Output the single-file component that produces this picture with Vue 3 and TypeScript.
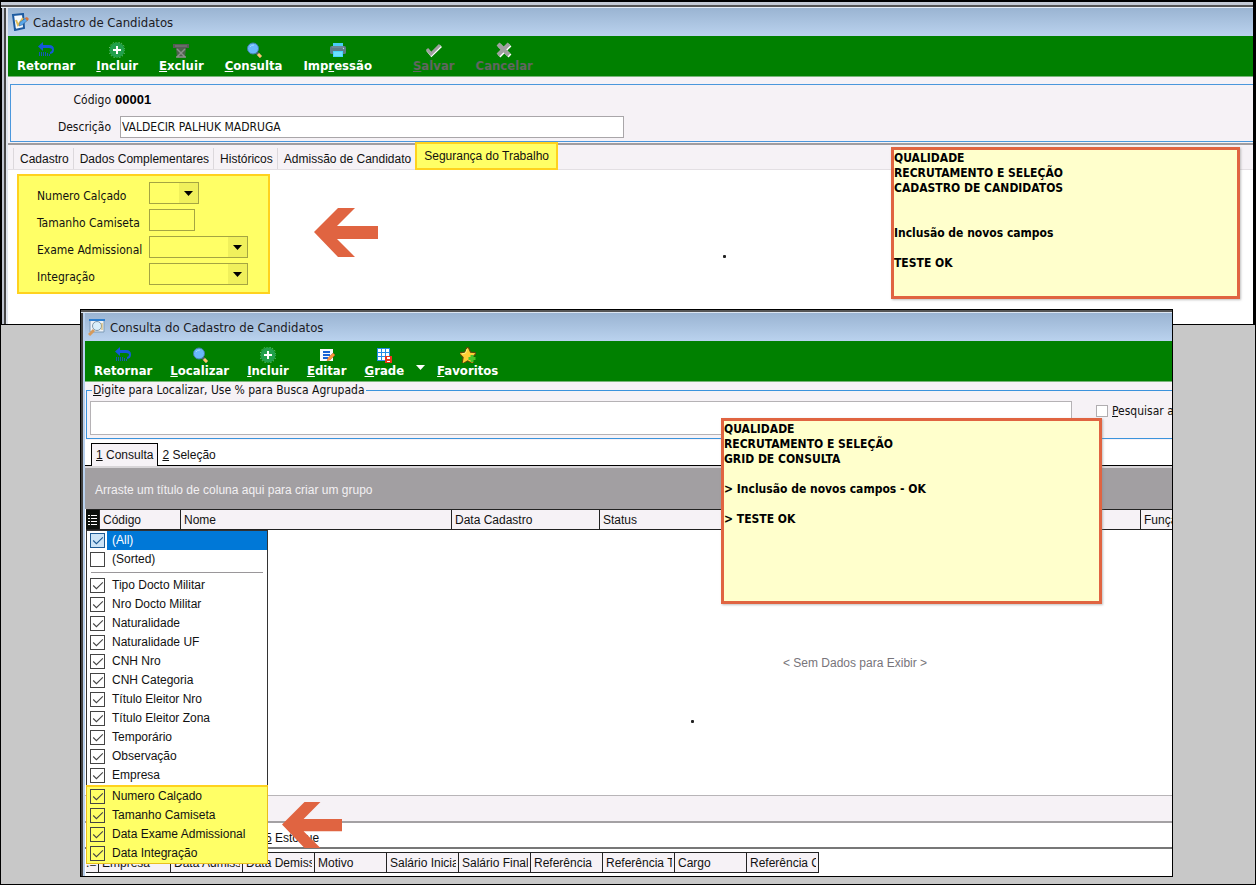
<script setup lang="ts">
import { ref } from 'vue'

interface Tool {
  label: [string, string, string]
  icon: string
  disabled?: boolean
  menu?: boolean
}

const icons: Record<string, string> = {
  back:
    '<path d="M0 4.500 5 0v3h6q5 0 5 4.500 0 4-4 4.500v-2q2-.5 2-2.200Q14 6 11 6H5v3z" fill="#1558d8"/><path d="M1.500 10v4M3.500 10v4M5.500 10v4M7.500 10v4M9.500 11v3M11.500 12v2" stroke="#1558b4" stroke-width="1"/>',
  add:
    '<circle cx="8" cy="8" r="8" fill="none" stroke="#9adba0" stroke-width="1" stroke-dasharray="1 2"/><circle cx="8" cy="8" r="7.500" fill="#22a04c"/><path d="M8 4v8M4 8h8" stroke="#fff" stroke-width="2"/>',
  trash:
    '<path d="M0 2h16v4H0z" fill="#565a56"/><path d="M2 4h12" stroke="#7b807b"/><path d="M3 6h10l-1 9.500H4z" fill="#4c624c"/><path d="M4 7l8 8M12 7l-8 8M3 15h10" stroke="#8b8f8b" stroke-width="1.500"/>',
  search:
    '<path d="m10 10 5 5" stroke="#4e6268" stroke-width="3"/><path d="m12 12 3 3" stroke="#ffc96a" stroke-width="3"/><circle cx="7" cy="6.500" r="5.500" fill="#69b9fb" stroke="#427fa9"/><path d="M4 5q1-2 4-2" stroke="#a1d8ff" fill="none"/>',
  print:
    '<path d="M3 1h10v4H3z" fill="#48cdf8"/><rect y="4" width="16" height="8" rx="1.500" fill="#5e7b89"/><path d="M2 5h12" stroke="#7897a3"/><path d="M3 9h10v6H3z" fill="#48d6ff"/><path d="M4 11h8M4 13h8" stroke="#90ebff"/><circle cx="13.500" cy="6.500" r=".7" fill="#bed5e0"/>',
  check:
    '<path d="m1.500 8 4 5L15 4" fill="none" stroke="#fff" stroke-width="3"/><path d="m1 7 4 5 9-9" fill="none" stroke="#a0a0a0" stroke-width="3"/>',
  cancel:
    '<path d="m3 3 11 11M14 3 3 14" stroke="#fff" stroke-width="4"/><path d="m2 2 11 11M13 2 2 13" stroke="#a0a0a0" stroke-width="4"/>',
  edit:
    '<path d="M1 2h13v12H1z" fill="#f7faff"/><path d="M4 5h7M4 8h7M4 11h5" stroke="#1762d5" stroke-width="2"/><path d="m8 14 1-3 5-5 2 2-5 5z" fill="#ff963c" stroke="#b85e23" stroke-width=".5"/>',
  grid:
    '<path d="M1 1h13v13H1z" fill="#238de6"/><path d="M2 2h3v3H2zM6 2h3v3H6zM10 2h3v3h-3zM2 6h3v3H2zM6 6h3v3H6zM10 6h3v3h-3zM2 10h3v3H2zM6 10h3v3H6z" fill="#fff"/><path d="M9 9h7v7H9z" fill="#ec321d"/><path d="M11 10h3v2h-3zM11 14h3v1h-3z" fill="#fff"/>',
  star:
    '<path d="m8 0 2.500 5.300 5.500.6-4 4 1 6-5-3-5 3 1-6-4-4 5.500-.6z" fill="#ffcf35" stroke="#5a4908" transform="translate(-1.500 -1) scale(1.150)"/><path d="m7 2-1.500 4L2 7" stroke="#fff486" fill="none"/><path d="M12 8v7M8.500 11.500h7" stroke="#48c629" stroke-width="3"/>',
}

const registerTools: Tool[] = [
  { label: ['Retornar', '', ''], icon: 'back' },
  { label: ['', 'I', 'ncluir'], icon: 'add' },
  { label: ['', 'E', 'xcluir'], icon: 'trash' },
  { label: ['', 'C', 'onsulta'], icon: 'search' },
  { label: ['Imp', 'r', 'essão'], icon: 'print' },
  { label: ['', 'S', 'alvar'], icon: 'check', disabled: true },
  { label: ['Cancelar', '', ''], icon: 'cancel', disabled: true },
]

const queryTools: Tool[] = [
  { label: ['Retornar', '', ''], icon: 'back' },
  { label: ['', 'L', 'ocalizar'], icon: 'search' },
  { label: ['', 'I', 'ncluir'], icon: 'add' },
  { label: ['', 'E', 'ditar'], icon: 'edit' },
  { label: ['', 'G', 'rade'], icon: 'grid', menu: true },
  { label: ['', 'F', 'avoritos'], icon: 'star' },
]

const tabs = ['Cadastro', 'Dados Complementares', 'Históricos', 'Admissão de Candidato', 'Segurança do Trabalho']
const activeTab = ref(4)

const fields = [
  { id: 'calcado', label: 'Numero Calçado', kind: 'select', size: 'small' },
  { id: 'camiseta', label: 'Tamanho Camiseta', kind: 'input', size: 'tiny' },
  { id: 'exame', label: 'Exame Admissional', kind: 'select', size: 'wide' },
  { id: 'integracao', label: 'Integração', kind: 'select', size: 'wide' },
]

const registerNote = ['QUALIDADE', 'RECRUTAMENTO E SELEÇÃO', 'CADASTRO DE CANDIDATOS', '', '', 'Inclusão de novos campos', '', 'TESTE OK']
const queryNote = ['QUALIDADE', 'RECRUTAMENTO E SELEÇÃO', 'GRID DE CONSULTA', '', '> Inclusão de novos campos - OK', '', '> TESTE OK']

const modes = ref([
  { label: '(All)', on: true },
  { label: '(Sorted)', on: false },
])
const columns = ref(
  ['Tipo Docto Militar', 'Nro Docto Militar', 'Naturalidade', 'Naturalidade UF', 'CNH Nro', 'CNH Categoria',
    'Título Eleitor Nro', 'Título Eleitor Zona', 'Temporário', 'Observação', 'Empresa'].map((label) => ({ label, on: true })),
)
const newColumns = ref(
  ['Numero Calçado', 'Tamanho Camiseta', 'Data Exame Admissional', 'Data Integração'].map((label) => ({ label, on: true })),
)

const detailHeads = ['Empresa', 'Data Admissão', 'Data Demissão', 'Motivo', 'Salário Inicial', 'Salário Final',
  'Referência', 'Referência Tab', 'Cargo', 'Referência Cargo']

const description = ref('VALDECIR PALHUK MADRUGA')
const search = ref('')
const searchAll = ref(false)
</script>

<template>
  <main class="desktop">
    <section class="window register">
      <header class="titlebar">
        <svg class="app-icon" viewBox="0 0 18 18" aria-hidden="true">
          <path d="M2 2 12 1l1 14-9 2z" fill="#f4f9ff" stroke="#1d5aa0" stroke-width="2" />
          <path d="m5 7 2 5 5-7" fill="none" stroke="#e3bd58" stroke-width="2" />
          <path d="m8 13 1-4 6-4 2 2-6 5z" fill="#5aa7ea" stroke="#31608e" stroke-width=".5" />
          <path d="m14 5 2-1 2 2-2 2z" fill="#d8733d" />
        </svg>
        <h1>Cadastro de Candidatos</h1>
      </header>
      <nav class="toolbar roomy">
        <button v-for="tool in registerTools" :key="tool.icon" type="button" class="tool" :disabled="tool.disabled">
          <svg viewBox="0 0 16 16" aria-hidden="true" v-html="icons[tool.icon]"></svg>
          <span>{{ tool.label[0] }}<u>{{ tool.label[1] }}</u>{{ tool.label[2] }}</span>
        </button>
      </nav>
      <div class="identity-area">
        <div class="identity">
          <span class="caption">Código</span>
          <output class="code">00001</output>
          <label class="caption" for="descricao">Descrição</label>
          <input id="descricao" v-model="description" class="description" type="text" />
        </div>
      </div>
      <div class="tabs" role="tablist">
        <button
          v-for="(tab, i) in tabs"
          :key="tab"
          type="button"
          role="tab"
          class="tab"
          :class="{ active: i === activeTab }"
          :aria-selected="i === activeTab"
          @click="activeTab = i"
        >{{ tab }}</button>
      </div>
      <div class="page">
        <form class="safety" @submit.prevent>
          <template v-for="field in fields" :key="field.id">
            <label :for="field.id">{{ field.label }}</label>
            <span v-if="field.kind === 'select'" class="combo" :class="field.size">
              <select :id="field.id"><option value=""></option></select>
              <svg viewBox="0 0 9 5" aria-hidden="true"><path d="M0 0h9L4.500 5z" /></svg>
            </span>
            <input v-else :id="field.id" type="text" :class="field.size" />
          </template>
        </form>
      </div>
    </section>

    <svg class="pointer first" viewBox="0 0 64 50" aria-hidden="true">
      <path d="M0 24 24 0h17L23 18h41v13H23l18 18H24z" />
    </svg>
    <i class="dot upper"></i>

    <aside class="note note-register">
      <p v-for="(line, i) in registerNote" :key="i">{{ line }}</p>
    </aside>

    <section class="window query">
      <header class="titlebar">
        <svg class="app-icon" viewBox="0 0 18 18" aria-hidden="true">
          <path d="M2 2h14v12H2z" fill="#eef3f8" stroke="#7c9bb8" />
          <path d="M1 1h16v2H1z" fill="#2c7fd0" />
          <path d="m6 12-5 5" stroke="#d59a5c" stroke-width="3" />
          <circle cx="9" cy="8" r="4.500" fill="#d9effb" stroke="#7f98ab" />
          <path d="M14 5v7" stroke="#d4ae50" />
        </svg>
        <h2>Consulta do Cadastro de Candidatos</h2>
      </header>
      <nav class="toolbar">
        <template v-for="tool in queryTools" :key="tool.icon">
          <button type="button" class="tool">
            <svg viewBox="0 0 16 16" aria-hidden="true" v-html="icons[tool.icon]"></svg>
            <span>{{ tool.label[0] }}<u>{{ tool.label[1] }}</u>{{ tool.label[2] }}</span>
          </button>
          <button v-if="tool.menu" type="button" class="more" aria-label="Opções da grade">
            <svg viewBox="0 0 9 5" aria-hidden="true"><path d="M0 0h9L4.500 5z" /></svg>
          </button>
        </template>
      </nav>
      <div class="finder">
        <fieldset>
          <legend><label for="busca"><u>D</u>igite para Localizar, Use % para Busca Agrupada</label></legend>
          <input id="busca" v-model="search" class="search" type="text" />
          <label class="all"><input v-model="searchAll" type="checkbox" /><span><u>P</u>esquisar ao digitar</span></label>
        </fieldset>
      </div>
      <div class="sheet-tabs" role="tablist">
        <button type="button" role="tab" class="active" aria-selected="true"><u>1</u> Consulta</button>
        <button type="button" role="tab" aria-selected="false"><u>2</u> Seleção</button>
      </div>
      <div class="group-hint">Arraste um título de coluna aqui para criar um grupo</div>
      <div class="grid">
        <table class="heads">
          <colgroup>
            <col class="c-mark" /><col class="c-code" /><col class="c-name" /><col class="c-date" /><col class="c-status" /><col />
          </colgroup>
          <thead>
            <tr>
              <th class="mark">
                <svg viewBox="0 0 9 12" aria-hidden="true"><path d="M0 1.500h2M3 1.500h6M0 4.500h2M3 4.500h6M0 7.500h2M3 7.500h6M0 10.500h2M3 10.500h6" /></svg>
              </th>
              <th>Código</th><th>Nome</th><th>Data Cadastro</th><th>Status</th><th>Função</th>
            </tr>
          </thead>
        </table>
        <p class="empty">&lt; Sem Dados para Exibir &gt;</p>
        <i class="dot lower"></i>
        <div class="chooser">
          <label v-for="(item, i) in modes" :key="item.label" :class="{ current: i === 0 }">
            <span class="box"><input v-model="item.on" type="checkbox" /><svg v-if="item.on" viewBox="0 0 14 14" aria-hidden="true"><path d="m3 7 3 3 6-6" /></svg></span>
            <span class="name">{{ item.label }}</span>
          </label>
          <hr />
          <label v-for="item in columns" :key="item.label">
            <span class="box"><input v-model="item.on" type="checkbox" /><svg v-if="item.on" viewBox="0 0 14 14" aria-hidden="true"><path d="m3 7 3 3 6-6" /></svg></span>
            <span class="name">{{ item.label }}</span>
          </label>
          <div class="fresh">
            <label v-for="item in newColumns" :key="item.label">
              <span class="box"><input v-model="item.on" type="checkbox" /><svg v-if="item.on" viewBox="0 0 14 14" aria-hidden="true"><path d="m3 7 3 3 6-6" /></svg></span>
              <span class="name">{{ item.label }}</span>
            </label>
          </div>
        </div>
      </div>
      <div class="strip"></div>
      <div class="detail-tabs"><button type="button"><u>5</u> Estoque</button></div>
      <div class="detail">
        <table>
          <thead>
            <tr>
              <th class="corner">.≡</th>
              <th v-for="head in detailHeads" :key="head"><span>{{ head }}</span></th>
            </tr>
          </thead>
        </table>
      </div>
    </section>

    <svg class="pointer second" viewBox="0 0 64 50" aria-hidden="true">
      <path d="M0 24 24 0h17L23 18h41v13H23l18 18H24z" />
    </svg>

    <aside class="note note-query">
      <p v-for="(line, i) in queryNote" :key="i">{{ line }}</p>
    </aside>
  </main>
</template>

<style>
body {
  margin: 0;
}
</style>

<style scoped>
.desktop {
  --tahoma: 'DejaVu Sans Condensed', 'DejaVu Sans', sans-serif;
  --sans: 'Liberation Sans', Arial, sans-serif;
  --face: #f6f2f6;
  position: relative;
  box-sizing: border-box;
  min-height: 100vh;
  overflow: hidden;
  background: #c8c8c8;
  border: 1px solid #000;
  font: 12px/16px var(--sans);
  color: #111;
}
button, input, select {
  font: inherit;
  color: inherit;
  box-sizing: border-box;
  margin: 0;
  border-radius: 0;
}
button {
  border: 0;
  padding: 0;
  background: none;
}
h1, h2, p {
  margin: 0;
}
.window {
  box-sizing: border-box;
  display: flex;
  flex-direction: column;
  border: 1px solid #000;
  background: #fff;
  overflow: hidden;
}
.register {
  min-height: 324px;
  border-width: 1px 2px 1px 0;
  padding: 6px 0 0 7px;
  background: linear-gradient(#c5cbd6 0 3px, #555 3px 5px, #e8eff8 5px 6px, transparent 6px),
    linear-gradient(90deg, #000 0 1px, #bfc4d0 1px 3px, #444 3px 5px, #e0e5ee 5px 7px, #fff 7px);
}
.query {
  position: absolute;
  top: 308px;
  right: 82px;
  bottom: 7px;
  left: 79px;
  padding: 3px 0 3px 4px;
  background: linear-gradient(#555 0 2px, #dce6f2 2px 3px, transparent 3px),
    linear-gradient(90deg, #444 0 2px, #b9d1ee 2px 4px, #fff 4px);
}
.titlebar {
  display: flex;
  align-items: center;
  gap: 4px;
  height: 28px;
  padding-left: 3px;
  background: linear-gradient(#9ab4d2, #bad2ee);
}
.app-icon {
  width: 18px;
  height: 18px;
}
.titlebar h1, .titlebar h2 {
  padding-top: 2px;
  font: 13px/18px var(--tahoma);
  color: #1b1b24;
}
.toolbar {
  display: flex;
  align-items: flex-start;
  gap: 18px;
  height: 40px;
  padding-left: 9px;
  background: #008000;
  border-bottom: 1px solid #7ab67a;
}
.toolbar.roomy {
  gap: 21px;
}
.tool {
  display: flex;
  flex-direction: column;
  align-items: center;
  padding-top: 6px;
  font: bold 13px/16px var(--tahoma);
  color: #fff;
}
.tool svg {
  width: 16px;
  height: 16px;
}
.tool:disabled {
  color: #606660;
}
.tool:not(:disabled) + .tool:disabled {
  margin-left: 20px;
}
.more {
  align-self: center;
  margin: 12px -6px 0 -6px;
  height: 5px;
  display: flex;
}
.more svg {
  width: 9px;
  height: 5px;
  fill: #fff;
}
.identity-area {
  padding: 7px 0 1px 2px;
  background: var(--face);
}
.identity {
  display: grid;
  grid-template-columns: 100px minmax(0, 504px);
  grid-template-rows: 22px 22px;
  column-gap: 9px;
  row-gap: 5px;
  align-items: center;
  padding: 4px 0 3px;
  border: 1px solid #4a97dc;
  border-right: 0;
  font: 12px/16px var(--tahoma);
}
.caption {
  text-align: right;
}
.code {
  margin-left: -5px;
  font: bold 13px/16px var(--sans);
  color: #000;
}
.description {
  height: 22px;
  padding: 0 1px;
  border: 1px solid #a9a6a9;
  background: #fff;
}
.tabs {
  display: flex;
  align-items: flex-end;
  height: 24px;
  padding-left: 5px;
  border-top: 2px solid #a09da0;
  border-bottom: 1px solid #e3dfe3;
  background: var(--face);
}
.tab {
  height: 21px;
  padding: 0 4px 0 6px;
  border-left: 1px solid #dcd8dc;
  white-space: nowrap;
}
.tab.active {
  height: 28px;
  margin: -2px 0 -1px;
  padding: 0 7px;
  border: 2px solid #ffd21e;
  background: #ffff66;
}
.page {
  flex: 1;
  background: #fff;
  padding: 4px 9px 28px;
}
.safety {
  box-sizing: border-box;
  width: 253px;
  display: grid;
  grid-template-columns: 112px auto;
  grid-auto-rows: 22px;
  row-gap: 5px;
  align-items: center;
  justify-content: start;
  padding: 6px 18px 7px;
  border: 2px solid #ffd21e;
  background: #ffff66;
  font: 12px/16px var(--tahoma);
}
.safety label {
  padding-top: 5px;
  white-space: nowrap;
}
.combo {
  display: grid;
  align-items: center;
}
.combo > * {
  grid-area: 1 / 1;
}
.combo svg {
  justify-self: end;
  width: 9px;
  height: 5px;
  margin-right: 6px;
  pointer-events: none;
}
.safety select, .safety input {
  appearance: none;
  width: 100%;
  height: 22px;
  padding: 0;
  border: 1px solid #a5a542;
  background: linear-gradient(270deg, #f0f05c 19px, #ffff66 19px);
}
.safety input {
  background: #ffff66;
}
.safety .small {
  width: 50px;
}
.safety .tiny {
  width: 46px;
}
.safety .wide {
  width: 99px;
}
.pointer {
  position: absolute;
  fill: #e06441;
}
.pointer.first {
  left: 313px;
  top: 207px;
  width: 64px;
  height: 50px;
}
.pointer.second {
  left: 281px;
  top: 801px;
  width: 60px;
  height: 47px;
}
.dot {
  position: absolute;
  width: 3px;
  height: 3px;
  border-radius: 1px;
  background: #222;
}
.dot.upper {
  left: 722px;
  top: 254px;
}
.dot.lower {
  left: 606px;
  top: 211px;
}
.note {
  position: absolute;
  box-sizing: border-box;
  padding-top: 1px;
  border: 3px solid #e06441;
  background: #ffffcc;
  box-shadow: 1px 1px 2px #8888;
  font: bold 12px/15px var(--tahoma);
  color: #000;
}
.note p {
  min-height: 15px;
}
.note-register {
  top: 146px;
  right: 15px;
  width: 349px;
  height: 152px;
}
.note-query {
  top: 417px;
  left: 720px;
  width: 381px;
  height: 186px;
}
.finder {
  background: var(--face);
  padding: 0 0 1px 1px;
  font: 12px/16px var(--tahoma);
}
fieldset {
  display: flex;
  align-items: flex-start;
  height: 57px;
  box-sizing: border-box;
  margin: 0;
  padding: 3px 0 4px 3px;
  border: 1px solid #3b93dc;
  border-right: 0;
  min-width: 0;
}
legend {
  height: 16px;
  margin-left: 2px;
  padding: 0 1px;
}
.search {
  flex: 1;
  height: 34px;
  min-width: 0;
  border: 1px solid #b5b2b5;
  background: #fff;
}
.all {
  display: flex;
  align-items: center;
  gap: 4px;
  width: 76px;
  margin: 2px 0 0 24px;
  overflow: hidden;
  white-space: nowrap;
}
.all input {
  appearance: none;
  flex: none;
  width: 12px;
  height: 12px;
  border: 1px solid #b0adb0;
  background: #fff;
}
.sheet-tabs {
  display: flex;
  align-items: flex-end;
  height: 26px;
  padding-left: 6px;
  background: linear-gradient(#fff 25px, #000 25px);
}
.sheet-tabs button {
  height: 22px;
  padding: 0 4px;
}
.sheet-tabs .active {
  height: 23px;
  border: 1px solid #000;
  border-bottom: 0;
  background: var(--face);
}
.group-hint {
  height: 41px;
  padding-left: 10px;
  border-top: 2px solid #d8d5d8;
  background: #a29fa2;
  line-height: 44px;
  color: #f2f0f2;
}
.grid {
  position: relative;
  flex: 1;
  min-height: 265px;
  padding-left: 1px;
  background: #fff;
}
table {
  border-collapse: separate;
  border-spacing: 0;
  table-layout: fixed;
}
th {
  box-sizing: border-box;
  height: 21px;
  padding: 0 0 0 3px;
  overflow: hidden;
  border: solid #222;
  border-width: 1px 1px 1px 0;
  background: var(--face);
  font-weight: normal;
  text-align: left;
  white-space: nowrap;
}
.heads {
  width: 100%;
}
.c-mark {
  width: 14px;
}
.c-code {
  width: 81px;
}
.c-name {
  width: 271px;
}
.c-date {
  width: 148px;
}
.c-status {
  width: 541px;
}
.heads th:last-child {
  border-right: 0;
}
.mark {
  padding-left: 2px;
  background: #0c110c;
}
.mark svg {
  display: block;
  width: 9px;
  height: 12px;
  stroke: #fff;
}
.empty {
  position: absolute;
  top: 146px;
  left: 698px;
  color: #77747a;
}
.chooser {
  position: absolute;
  top: 21px;
  left: 1px;
  box-sizing: border-box;
  width: 182px;
  border: 1px solid #333;
  background: #fff;
}
.chooser label {
  display: flex;
  align-items: center;
  height: 19px;
  padding-left: 3px;
}
.chooser hr {
  margin: 3px 4px;
  border: 0;
  border-top: 1px solid #9a979a;
}
.box {
  display: grid;
  width: 15px;
  height: 15px;
  margin-right: 2px;
}
.box > * {
  grid-area: 1 / 1;
  width: 15px;
  height: 15px;
}
.box input {
  appearance: none;
  border: 1px solid #444;
  background: transparent;
}
.box svg {
  fill: none;
  stroke: #444;
  pointer-events: none;
}
.name {
  flex: 1;
  padding-left: 5px;
  line-height: 19px;
}
.current .name {
  background: #0078d7;
  color: #fff;
}
.current .box input {
  border-color: #1d5a94;
  background: #cce4f7;
}
.current .box svg {
  stroke: #1d5a94;
}
.fresh {
  margin: 0 -1px -1px;
  padding: 0 1px;
  border: 1px solid #e8bf1e;
  border-top: 2px solid #ffd21e;
  background: #ffff66;
}
.fresh label {
  padding-left: 2px;
}
.strip {
  height: 25px;
  border-top: 1px solid #b8b5b8;
  border-bottom: 2px solid #a4a1a4;
  background: var(--face);
}
.detail-tabs {
  display: flex;
  align-items: flex-end;
  height: 24px;
  padding-left: 180px;
  border-bottom: 2px solid #777;
}
.detail-tabs button {
  height: 18px;
}
.detail {
  padding: 3px 0 0 1px;
  overflow: hidden;
}
.detail table {
  width: 733px;
}
.detail th span {
  display: block;
  margin-right: 2px;
  overflow: hidden;
}
.detail .corner {
  width: 13px;
  padding: 0;
}
</style>
